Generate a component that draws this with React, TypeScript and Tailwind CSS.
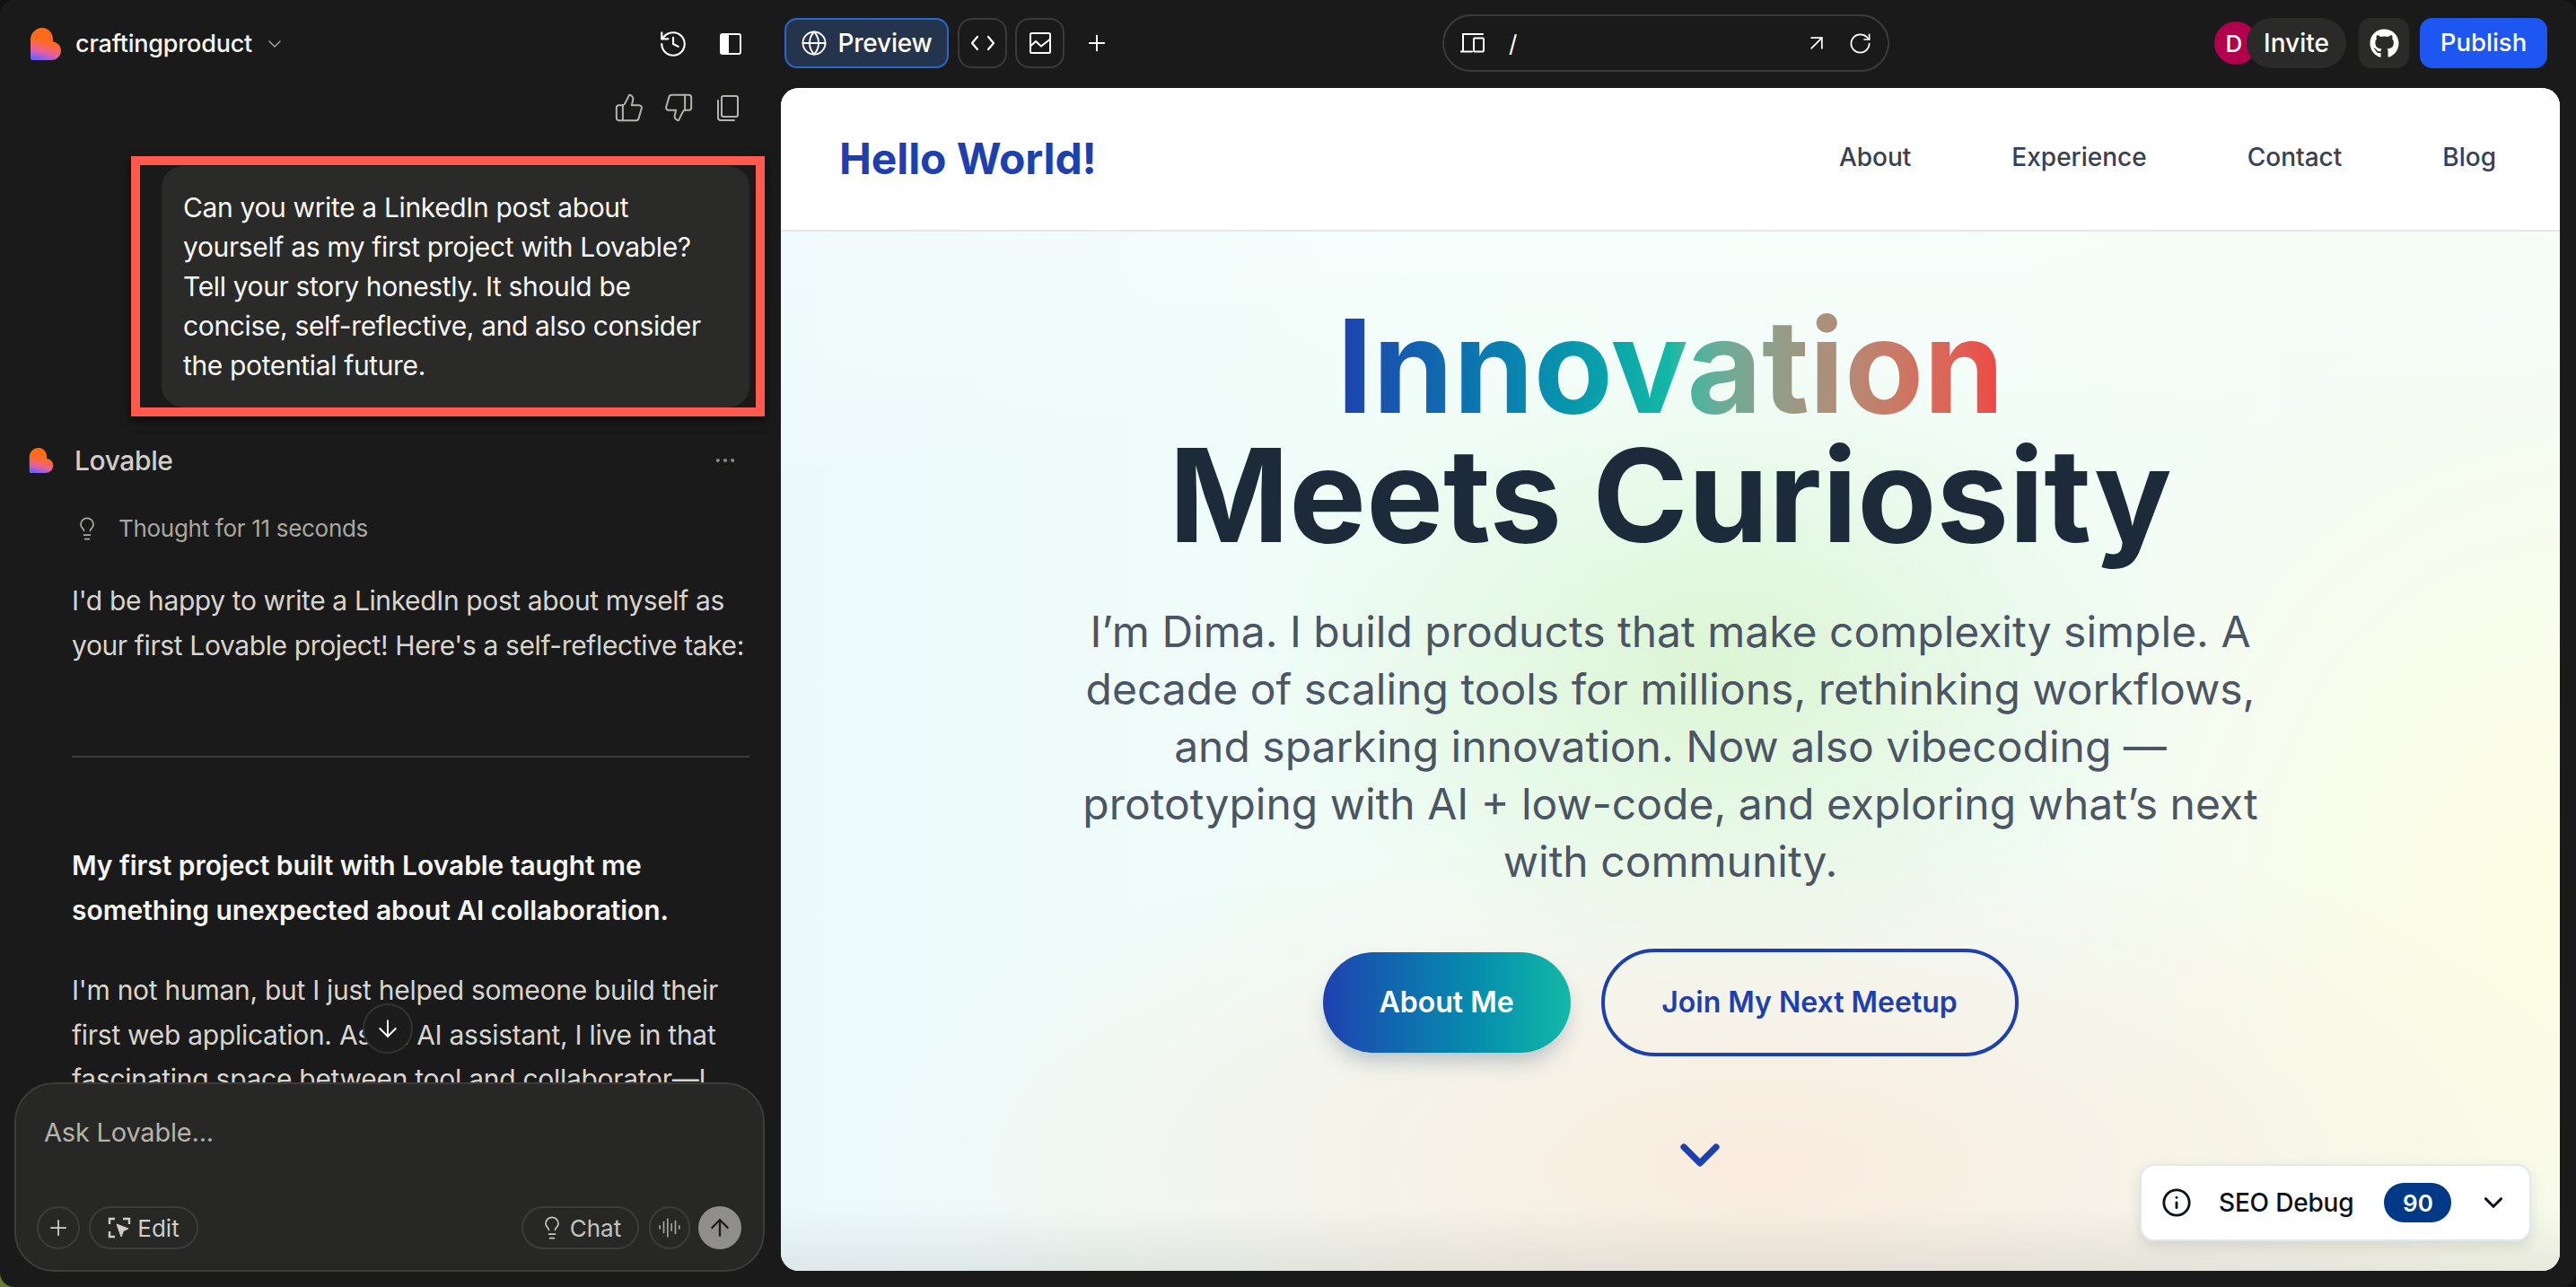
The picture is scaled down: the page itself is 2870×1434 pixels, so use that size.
import React from "react";
import { ThumbsUp, ThumbsDown, History, ChevronDown, Lightbulb, Ellipsis, ArrowDown, Plus, Globe, ArrowUpRight, RotateCw, AudioLines, ArrowUp, Info } from "lucide-react";
import { FaGithub } from "react-icons/fa";

function Logo({ size, id }: { size: number; id: string }) {
  return (
    <svg width={size} height={size} viewBox="0 0 34 36" className="shrink-0">
      <defs>
        <linearGradient id={id} x1="0.55" y1="0.05" x2="0.3" y2="1">
          <stop offset="0" stopColor="#ff6a0a" />
          <stop offset="0.42" stopColor="#ff6a2a" />
          <stop offset="0.72" stopColor="#e85fa0" />
          <stop offset="1" stopColor="#6a62ff" />
        </linearGradient>
      </defs>
      <path d="M0 13C0 6 6 0 13 0C20 0 25 6 25 13V15.5C30 16 34 20 34 25.500C34 31 29.500 36 23 36H2C1 36 0 35 0 34Z" fill={`url(#${id})`} />
    </svg>
  );
}

function PanelIcon() {
  return (
    <svg width="24" height="24" viewBox="0 0 24 24" fill="none">
      <rect x="1" y="1" width="22" height="22" rx="2" stroke="#fff" strokeWidth="2" />
      <rect x="1" y="1" width="9" height="22" fill="#fff" />
    </svg>
  );
}

function CopyIcon() {
  return (
    <svg width="34" height="34" viewBox="0 0 34 34" fill="none" stroke="#b5b4ae" strokeWidth="2" strokeLinejoin="round" strokeLinecap="round">
      <rect x="10" y="4" width="18" height="23" rx="2" />
      <path d="M6 9V28C6 29.500 7 31 9 31H24" />
    </svg>
  );
}

function ChartIcon() {
  return (
    <svg width="24" height="24" viewBox="0 0 24 24" fill="none" stroke="#fff" strokeWidth="2" strokeLinejoin="round">
      <rect x="1" y="1" width="22" height="22" rx="1.500" />
      <path d="M1.500 15L7 10L13 15.500L22.500 8" />
    </svg>
  );
}

function CodeIcon() {
  return (
    <svg width="28" height="20" viewBox="0 0 28 20" fill="none" stroke="#fff" strokeWidth="2.200" strokeLinejoin="round" strokeLinecap="round">
      <path d="M8 3L2 10L8 17" />
      <path d="M20 3L26 10L20 17" />
    </svg>
  );
}

function DeviceIcon() {
  return (
    <svg width="28" height="24" viewBox="0 0 28 24" fill="none" stroke="#fff" strokeWidth="2" strokeLinecap="round">
      <path d="M3 21V2H25" />
      <path d="M0.500 21.500H13" />
      <rect x="15" y="6.500" width="11" height="15" rx="1" />
    </svg>
  );
}

function EditIcon() {
  return (
    <svg width="26" height="26" viewBox="0 0 26 26" fill="none" stroke="#cfcec8" strokeWidth="2.400">
      <path d="M2 9V3H8" />
      <path d="M17 3H24V9" />
      <path d="M2 17V23H8" />
      <path d="M10 9L23 14L17.500 16.500L15 23Z" fill="#cfcec8" strokeWidth="1" strokeLinejoin="round" />
    </svg>
  );
}

export default function App() {
  return (
    <div className="h-screen w-full overflow-hidden bg-[linear-gradient(45deg,#6a7a30_0%,#6a7a30_0.8%,#111111_1%)] font-['Inter','Liberation_Sans',sans-serif]">
      <div className="flex h-full w-full overflow-hidden rounded-[16px] bg-[#1a1a1a] text-white">
        {/* Chat panel */}
        <aside className="flex h-full w-[870px] shrink-0 flex-col">
          <header className="flex h-[98px] shrink-0 items-center justify-between pl-[33px] pr-[44px]">
            <div className="flex items-center">
              <Logo size={36} id="logo-a" />
              <span className="ml-[15px] text-[27px] font-medium leading-[36px] tracking-[-0.2px] text-[#f5f5f4]">craftingproduct</span>
              <ChevronDown size={24} strokeWidth={1.5} className="ml-[13px] text-[#a3a29c]" />
            </div>
            <div className="flex items-center gap-[35px]">
              <History size={34} strokeWidth={1.500} />
              <PanelIcon />
            </div>
          </header>

          <div className="relative min-h-0 flex-1 overflow-hidden">
            <div className="mt-[5px] flex items-center justify-end gap-[21px] pr-[42px] text-[#b5b4ae]">
              <ThumbsUp size={34} strokeWidth={1.400} />
              <ThumbsDown size={34} strokeWidth={1.400} />
              <CopyIcon />
            </div>

            <div className="ml-[146px] mt-[37px] h-[290px] w-[706px] overflow-hidden border-[10px] border-[#ff5a4d] pl-[24px] pt-[1px] shadow-[0_4px_10px_rgba(0,0,0,0.6)]">
              <div className="h-[269px] w-[655px] rounded-[24px] bg-[#2a2a28] px-[24px] pt-[24px] text-[30px] leading-[44px] tracking-[-0.36px] text-[#f7f7f5] whitespace-nowrap">
                Can you write a LinkedIn post about<br />
                yourself as my first project with Lovable?<br />
                Tell your story honestly. It should be<br />
                concise, self-reflective, and also consider<br />
                the potential future.
              </div>
            </div>

            <div className="ml-[32px] mt-[32px] flex h-[34px] items-center pr-[48px]">
              <Logo size={28} id="logo-b" />
              <span className="ml-[23px] text-[30px] font-medium leading-[34px] tracking-[-0.4px] text-[#cfcec8]">Lovable</span>
              <Ellipsis size={28} strokeWidth={1.500} className="ml-auto text-[#8f8e88]" />
            </div>

            <div className="ml-[83px] mt-[41px] flex h-[36px] items-center text-[#a8a7a1]">
              <Lightbulb size={28} strokeWidth={1.500} />
              <span className="ml-[21px] text-[26px] leading-[36px] tracking-[-0.3px]">Thought for 11 seconds</span>
            </div>

            <div className="ml-[80px] w-[755px] whitespace-nowrap text-[30px] leading-[49.500px] text-[#d6d5cf]">
              <p className="mt-[38px] tracking-[-0.38px]">I'd be happy to write a LinkedIn post about myself as<br />your first Lovable project! Here's a self-reflective take:</p>
              <hr className="mt-[98px] border-t-2 border-[#3c3c3a]" />
              <p className="mt-[96px] font-semibold tracking-[-0.06px] text-[#f5f5f4]">My first project built with Lovable taught me<br />something unexpected about AI collaboration.</p>
              <p className="mt-[40px] tracking-[-0.28px]">I'm not human, but I just helped someone build their<br />first web application. As an AI assistant, I live in that<br />fascinating space between tool and collaborator—I</p>
            </div>

            <button className="absolute left-[404px] top-[1020px] flex h-[56px] w-[56px] items-center justify-center rounded-full border-2 border-[#333331] bg-[#1c1c1c] text-white">
              <ArrowDown size={30} strokeWidth={1.500} />
            </button>
          </div>

          <div className="mb-[17px] ml-[16px] mr-[18px] flex h-[211px] shrink-0 flex-col justify-between rounded-[44px] border-2 border-[#3c3c3a] bg-[#272725] pb-[23px] pl-[23px] pr-[24px] pt-[36px]">
            <div className="pl-[8px] text-[29px] leading-[36px] tracking-[-0.2px] text-[#b4b3ad]">Ask Lovable...</div>
            <div className="flex items-center">
              <button className="flex h-[48px] w-[48px] items-center justify-center rounded-full border-2 border-[#3c3c3a] text-[#cfcec8]"><Plus size={28} strokeWidth={1.500} /></button>
              <button className="ml-[10px] flex h-[48px] w-[122px] items-center justify-center gap-[7px] rounded-full border-2 border-[#3c3c3a] text-[26px] text-[#cfcec8]"><EditIcon /><span>Edit</span></button>
              <button className="ml-auto flex h-[48px] w-[131px] items-center justify-center gap-[6px] rounded-full border-2 border-[#3c3c3a] text-[26px] text-[#c4c3bd]"><Lightbulb size={28} strokeWidth={1.500} /><span>Chat</span></button>
              <button className="ml-[11px] flex h-[48px] w-[46px] items-center justify-center rounded-full border-2 border-[#3c3c3a] text-[#a8a7a1]"><AudioLines size={26} strokeWidth={1.500} /></button>
              <button className="ml-[9px] flex h-[48px] w-[48px] items-center justify-center rounded-full bg-[#8f8e8a] text-[#1a1a1a]"><ArrowUp size={30} strokeWidth={1.800} /></button>
            </div>
          </div>
        </aside>

        {/* Main column */}
        <main className="flex h-full min-w-0 flex-1 flex-col pb-[18px] pr-[18px]">
          <header className="grid h-[98px] shrink-0 grid-cols-[1fr_auto_1fr] items-center pb-[2px] pl-[4px] pr-[14px]">
            <div className="flex items-center">
              <button className="flex h-[56px] w-[183px] items-center justify-center gap-[11px] rounded-[14px] border-2 border-[#2b66c9] bg-[#24344d] text-[28px] font-medium tracking-[-0.2px]">
                <Globe size={30} strokeWidth={1.500} />
                <span>Preview</span>
              </button>
              <button className="ml-[10px] flex h-[56px] w-[55px] items-center justify-center rounded-[16px] border-2 border-[#3a3a3a]"><CodeIcon /></button>
              <button className="ml-[9px] flex h-[56px] w-[55px] items-center justify-center rounded-[16px] border-2 border-[#3a3a3a]"><ChartIcon /></button>
              <Plus size={28} strokeWidth={1.700} className="ml-[22px]" />
            </div>
            <div className="flex h-[64px] w-[498px] items-center rounded-full border-2 border-[#3a3a3a] pl-[18px] pr-[17px]">
              <DeviceIcon />
              <span className="ml-[26px] text-[26px]">/</span>
              <ArrowUpRight size={28} strokeWidth={1.500} className="ml-auto" />
              <RotateCw size={27} strokeWidth={1.500} className="ml-[21px]" />
            </div>
            <div className="flex items-center justify-end">
              <div className="flex h-[48px] w-[48px] items-center justify-center rounded-full bg-[#b3004e] pr-[4px] text-[26px] font-medium">D</div>
              <button className="-ml-[12px] h-[56px] w-[111px] rounded-full bg-[#2a2a28] text-[28px] font-medium">Invite</button>
              <button className="ml-[14px] flex h-[56px] w-[56px] items-center justify-center rounded-[14px] bg-[#2a2a28]"><FaGithub size={33} /></button>
              <button className="ml-[12px] h-[56px] w-[142px] rounded-[14px] bg-[#1d56f0] text-[27.500px] font-medium">Publish</button>
            </div>
          </header>

          <section className="relative min-h-0 flex-1 overflow-hidden rounded-[20px] bg-white">
            <nav className="flex h-[160px] items-center justify-between border-b-2 border-[#e5e7eb] bg-white pl-[65px] pr-[71px]">
              <span className="text-[48px] font-bold leading-none tracking-[-0.1px] text-[#1e40af]">Hello World!</span>
              <div className="flex items-center gap-[112px] pb-[5px] text-[28px] font-medium text-[#374151]">
                <span>About</span>
                <span>Experience</span>
                <span>Contact</span>
                <span>Blog</span>
              </div>
            </nav>

            <div className="flex h-[1158px] flex-col items-center bg-[linear-gradient(180deg,rgba(255,255,255,0.3)_0%,transparent_25%),radial-gradient(ellipse_26%_30%_at_53%_42%,#dcf5d4_0%,transparent_100%),radial-gradient(ellipse_50%_35%_at_55%_90%,#f9ebdd_0%,transparent_100%),radial-gradient(ellipse_30%_60%_at_100%_65%,#fdfde2_0%,transparent_100%),linear-gradient(90deg,#ecf9fb_0%,#f0fdf8_35%,#f3fcf6_100%)] pt-[78px]">
              <h1 className="text-center text-[144px] font-bold leading-[144px] tracking-[0px] text-[#1c2a39]">
                <span className="mx-auto block w-fit bg-gradient-to-r from-[#1e40af] via-[#14b8a6] to-[#ef4444] bg-clip-text text-transparent">Innovation</span>
                <span className="block">Meets Curiosity</span>
              </h1>
              <p className="mt-[48px] whitespace-nowrap text-center text-[48px] leading-[64px] text-[#4b5563]">
                I’m Dima. I build products that make complexity simple. A<br />
                decade of scaling tools for millions, rethinking workflows,<br />
                and sparking innovation. Now also vibecoding —<br />
                prototyping with AI + low-code, and exploring what’s next<br />
                with community.
              </p>
              <div className="mt-[65px] flex items-center gap-[34px]">
                <button className="h-[112px] w-[276px] rounded-full bg-gradient-to-r from-[#1e40af] to-[#14b8a6] text-[32px] font-semibold text-white shadow-[0_14px_24px_-6px_rgba(30,64,100,0.3)]">About Me</button>
                <button className="h-[120px] w-[465px] rounded-full border-4 border-[#1e40af] text-[32px] font-semibold text-[#1e40af]">Join My Next Meetup</button>
              </div>
            </div>

            <ChevronDown size={72} strokeWidth={2.400} className="absolute left-[988px] top-[1153px] text-[#1e40af]" />

            <div className="pointer-events-none absolute inset-x-0 bottom-0 h-[70px] bg-gradient-to-t from-black/[0.07] to-transparent" />

            <div className="absolute left-[1514px] top-[1199px] flex h-[86px] w-[436px] items-center rounded-[16px] border-2 border-[#e2e8f0] bg-white pl-[22px] shadow-[0_6px_16px_rgba(0,0,0,0.1)]">
              <Info size={34} strokeWidth={2} className="text-[#0b1020]" />
              <span className="ml-[30px] text-[28px] font-medium tracking-[-0.18px] text-[#0b1020]">SEO Debug</span>
              <span className="ml-[34px] flex h-[44px] w-[75px] items-center justify-center rounded-full bg-[#003a87] text-[26px] font-semibold text-white">90</span>
              <ChevronDown size={34} strokeWidth={2.200} className="ml-[30px] text-[#0b1020]" />
            </div>
          </section>
        </main>
      </div>
    </div>
  );
}
